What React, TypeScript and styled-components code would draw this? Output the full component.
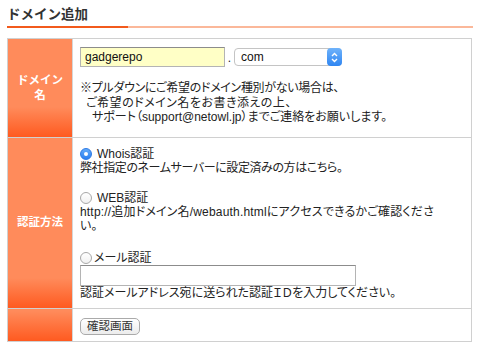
import React from "react";
import styled, { createGlobalStyle } from "styled-components";

const Global = createGlobalStyle`
  html, body { margin: 0; padding: 0; background: #fff; }
  body {
    font-family: "Liberation Sans", "Noto Sans CJK JP", sans-serif;
    color: #333;
  }
`;

const Page = styled.div`
  width: 480px;
  height: 354px;
  padding: 0 7px;
  box-sizing: border-box;
`;

const Heading = styled.h2`
  margin: 0;
  padding: 6px 0 2px;
  font-size: 13.5px;
  line-height: 18px;
  font-weight: bold;
  color: #333;
`;

const Rule = styled.div`
  height: 2px;
  width: 466px;
  background: linear-gradient(to right, #f25a1c 121px, #fbb89a 121px);
`;

const Table = styled.div`
  margin-top: 10px;
  width: 465px;
  box-sizing: border-box;
  border: 1px solid #d0d0d0;
`;

const Row = styled.div<{ $first?: boolean }>`
  display: flex;
  border-top: ${(p) => (p.$first ? "none" : "1px solid #d0d0d0")};
`;

const Label = styled.div`
  flex: none;
  width: 65px;
  box-sizing: border-box;
  padding: 0 8px;
  border-right: 1px solid #d6d6d6;
  display: flex;
  align-items: center;
  justify-content: center;
  text-align: center;
  color: #fff;
  font-weight: bold;
  font-size: 11.5px;
  line-height: 15px;
  background: linear-gradient(
    to bottom,
    #ff8b5b 0,
    #ff8b5b calc(100% - 30px),
    #ff5a20 100%
  );
`;

const Cell = styled.div<{ $pad: string }>`
  flex: 1;
  padding: ${(p) => p.$pad};
  font-size: 12px;
  line-height: 14px;
  font-feature-settings: "palt";
  color: #222;
`;

const DomainLine = styled.div`
  display: flex;
  align-items: center;
  height: 20px;
`;

const TextInput = styled.input<{ $w: number; $h: number; $bg: string }>`
  display: block;
  width: ${(p) => p.$w}px;
  height: ${(p) => p.$h}px;
  box-sizing: border-box;
  margin: 0;
  padding: 0 4px;
  border: 1px solid #b4b4b4;
  border-top-color: #8c8c8c;
  font-family: "Liberation Sans", "Noto Sans CJK JP", sans-serif;
  font-size: 12px;
  color: #111;
  outline: none;
  background: ${(p) => p.$bg};
`;

const Dot = styled.span`
  width: 9px;
  text-align: center;
  font-size: 12px;
  line-height: 20px;
  padding-top: 2px;
`;

const SelectBox = styled.div`
  position: relative;
  width: 108px;
  height: 18px;
  box-sizing: border-box;
  border: 1px solid #c4c4c4;
  border-radius: 4px;
  background: #fff;
  font-size: 12px;
  line-height: 16px;
  padding-left: 6px;
  color: #111;
`;

const SelectArrow = styled.span`
  position: absolute;
  top: -1px;
  right: -1px;
  width: 15px;
  height: 18px;
  border-radius: 4px;
  background: linear-gradient(to bottom, #6fb3fb, #2f86f2);
  display: flex;
  align-items: center;
  justify-content: center;
`;

const Note = styled.div`
  margin-top: 14px;
  line-height: 14.5px;
`;

const Line = styled.div<{ $indent?: number; $ls?: number }>`
  padding-left: ${(p) => p.$indent ?? 0}px;
  letter-spacing: ${(p) => p.$ls ?? 0}px;
  white-space: nowrap;
`;

const Option = styled.div<{ $mt: number }>`
  margin-top: ${(p) => p.$mt}px;
`;

const RadioLine = styled.label<{ $gap: number }>`
  display: flex;
  align-items: center;
  gap: ${(p) => p.$gap}px;
  height: 14px;
`;

const Radio = styled.span<{ $on?: boolean }>`
  flex: none;
  width: 12px;
  height: 12px;
  box-sizing: border-box;
  border-radius: 50%;
  display: flex;
  align-items: center;
  justify-content: center;
  border: 1px solid ${(p) => (p.$on ? "#2b79e6" : "#a8a8a8")};
  background: ${(p) =>
    p.$on
      ? "linear-gradient(to bottom, #62aaf9, #2c80f0)"
      : "linear-gradient(to bottom, #ffffff, #f1f1f1)"};
  &::after {
    content: "";
    display: ${(p) => (p.$on ? "block" : "none")};
    width: 4px;
    height: 4px;
    border-radius: 50%;
    background: #fff;
  }
`;

const Button = styled.button`
  display: block;
  height: 17px;
  margin: 0;
  padding: 0 6px;
  box-sizing: border-box;
  border: 1px solid #aaa;
  border-radius: 5px;
  background: linear-gradient(to bottom, #ffffff, #ececec);
  font-family: "Liberation Sans", "Noto Sans CJK JP", sans-serif;
  font-size: 11.5px;
  line-height: 15px;
  color: #333;
`;

export default function App() {
  return (
    <Page>
      <Global />
      <Heading>ドメイン追加</Heading>
      <Rule />
      <Table>
        <Row $first>
          <Label>ドメイン名</Label>
          <Cell $pad="8px 7px 12px">
            <DomainLine>
              <TextInput $w={145} $h={20} $bg="#ffffc6" defaultValue="gadgerepo" />
              <Dot>.</Dot>
              <SelectBox>
                com
                <SelectArrow>
                  <svg width="7" height="11" viewBox="0 0 7 11">
                    <path
                      d="M1 4 L3.5 1.5 L6 4 M1 7 L3.5 9.5 L6 7"
                      fill="none"
                      stroke="#fff"
                      strokeWidth="1.4"
                    />
                  </svg>
                </SelectArrow>
              </SelectBox>
            </DomainLine>
            <Note>
              <Line $ls={-0.3}>※プルダウンにご希望のドメイン種別がない場合は、</Line>
              <Line $indent={6} $ls={0.5}>ご希望のドメイン名をお書き添えの上、</Line>
              <Line $indent={12}>
                サポート（support@netowl.jp）までご連絡をお願いします。
              </Line>
            </Note>
          </Cell>
        </Row>
        <Row>
          <Label>認証方法</Label>
          <Cell $pad="9px 7px 8px">
            <Option $mt={0}>
              <RadioLine $gap={5}>
                <Radio $on />
                Whois認証
              </RadioLine>
              <Line $ls={-0.4}>弊社指定のネームサーバーに設定済みの方はこちら。</Line>
            </Option>
            <Option $mt={16}>
              <RadioLine $gap={5}>
                <Radio />
                WEB認証
              </RadioLine>
              <Line $ls={0.18}>
                http://追加ドメイン名/webauth.htmlにアクセスできるかご確認くださ
              </Line>
              <Line>い。</Line>
            </Option>
            <Option $mt={18}>
              <RadioLine $gap={2}>
                <Radio />
                メール認証
              </RadioLine>
              <TextInput $w={276} $h={21} $bg="#fff" />
              <Line>認証メールアドレス宛に送られた認証ＩＤを入力してください。</Line>
            </Option>
          </Cell>
        </Row>
        <Row>
          <Label />
          <Cell $pad="9px 7px 6px">
            <Button>確認画面</Button>
          </Cell>
        </Row>
      </Table>
    </Page>
  );
}
